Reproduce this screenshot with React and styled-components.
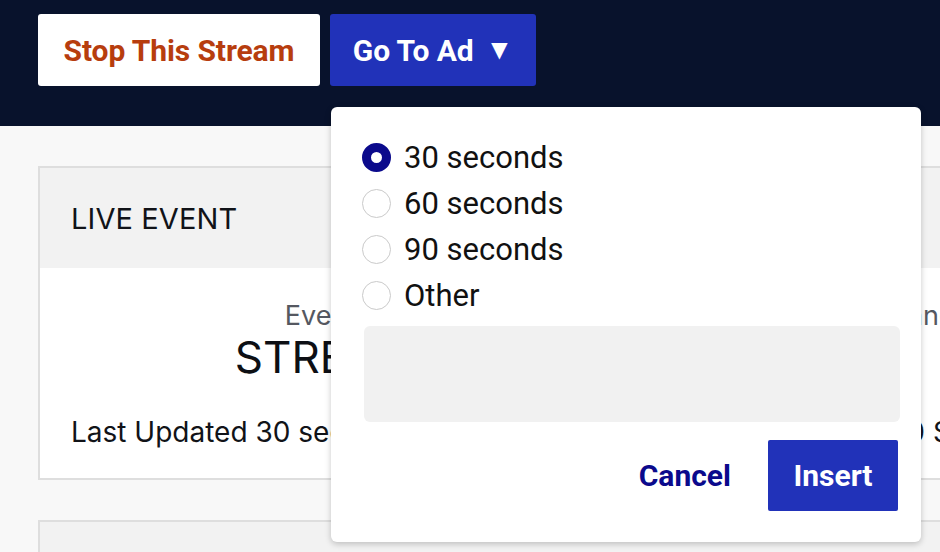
import React, { useState } from "react";
import styled, { createGlobalStyle } from "styled-components";

const Global = createGlobalStyle`
  html, body { margin: 0; padding: 0; }
  body {
    background: #f8f8f8;
    font-family: Inter, "Liberation Sans", sans-serif;
    overflow: hidden;
    width: 940px;
    height: 552px;
  }
  * { box-sizing: border-box; }
`;

const Page = styled.div`
  position: relative;
  width: 940px;
  height: 552px;
  overflow: hidden;
`;

const TopBar = styled.header`
  height: 126px;
  background: #08122c;
  display: flex;
  align-items: flex-start;
  gap: 10px;
  padding: 14px 0 0 38px;
`;

const BarButton = styled.button`
  height: 72px;
  width: ${(p) => p.$w}px;
  border: none;
  border-radius: 3px;
  background: ${(p) => (p.$primary ? "#2132b9" : "#ffffff")};
  color: ${(p) => (p.$primary ? "#ffffff" : "#b73d0e")};
  font-family: Roboto, "Liberation Sans", sans-serif;
  font-weight: 700;
  font-size: 30px;
  letter-spacing: -0.1px;
  display: flex;
  align-items: center;
  justify-content: center;
  gap: 12px;
  padding: 0;
`;

const Caret = styled.span`
  font-size: 28px;
  line-height: 1;
`;

const Main = styled.main`
  display: flex;
  flex-direction: column;
  gap: 40px;
  padding: 40px 0 0 38px;
`;

const Card = styled.section`
  width: 1240px;
  border: 2px solid #dedede;
  background: #ffffff;
`;

const CardHead = styled.div`
  height: 100px;
  background: #f2f2f2;
  display: flex;
  align-items: center;
  padding-left: 31px;
  font-size: 29px;
  color: #111318;
  letter-spacing: 0.1px;
`;

const CardBody = styled.div`
  padding: 32px 31px 29px;
  display: flex;
  flex-direction: column;
  gap: 33px;
`;

const Stats = styled.div`
  display: grid;
  grid-template-columns: 1fr 1fr;
`;

const Stat = styled.div`
  display: flex;
  flex-direction: column;
  align-items: center;
`;

const StatLabel = styled.div`
  font-size: 27px;
  color: #555861;
  line-height: 32px;
`;

const StatValue = styled.div`
  font-size: 44px;
  color: #0d0f14;
  line-height: 50px;
`;

const Footer = styled.div`
  display: grid;
  grid-template-columns: 1fr 1fr;
  font-size: 28px;
  line-height: 34px;
  color: #111318;
`;

const Popup = styled.div`
  position: absolute;
  left: 331px;
  top: 107px;
  width: 590px;
  height: 435px;
  background: #ffffff;
  border-radius: 6px;
  box-shadow: 0 2px 6px rgba(0, 0, 0, 0.22);
  padding: 28px 21px 31px 31px;
  display: flex;
  flex-direction: column;
  font-family: Roboto, "Liberation Sans", sans-serif;
`;

const Option = styled.label`
  height: 46px;
  display: flex;
  align-items: center;
  gap: 13px;
  font-size: 31px;
  color: #111;
  cursor: pointer;
`;

const Radio = styled.span`
  width: 29px;
  height: 29px;
  border-radius: 50%;
  flex: none;
  border: ${(p) => (p.$on ? "9px solid #0b0a8c" : "1.5px solid #cacaca")};
  background: #fff;
`;

const Field = styled.div`
  margin: 8px 0 0 2px;
  height: 96px;
  background: #f1f1f1;
  border-radius: 6px;
`;

const Actions = styled.div`
  margin-top: 18px;
  display: flex;
  justify-content: flex-end;
  align-items: center;
  gap: 37px;
  padding-right: 2px;
`;

const TextButton = styled.button`
  border: none;
  background: none;
  padding: 0;
  font-family: Roboto, "Liberation Sans", sans-serif;
  font-weight: 700;
  font-size: 30px;
  color: #0b0a8c;
`;

const SolidButton = styled.button`
  width: 130px;
  height: 71px;
  border: none;
  border-radius: 2px;
  background: #2132b9;
  color: #fff;
  font-family: Roboto, "Liberation Sans", sans-serif;
  font-weight: 700;
  font-size: 30px;
`;

const options = ["30 seconds", "60 seconds", "90 seconds", "Other"];

export default function App() {
  const [sel, setSel] = useState(0);
  return (
    <Page>
      <Global />
      <TopBar>
        <BarButton $w={282}>Stop This Stream</BarButton>
        <BarButton $w={206} $primary>
          Go To Ad <Caret>▼</Caret>
        </BarButton>
      </TopBar>
      <Main>
        <Card>
          <CardHead>LIVE EVENT</CardHead>
          <CardBody>
            <Stats>
              <Stat>
                <StatLabel>Event Status</StatLabel>
                <StatValue>STREAMING</StatValue>
              </Stat>
              <Stat>
                <StatLabel>Connections</StatLabel>
                <StatValue>1</StatValue>
              </Stat>
            </Stats>
            <Footer>
              <span>Last Updated 30 seconds ago</span>
              <span>Next Ad Break In: 10 Seconds</span>
            </Footer>
          </CardBody>
        </Card>
        <Card>
          <CardHead>STREAM HEALTH</CardHead>
        </Card>
      </Main>
      <Popup>
        {options.map((o, i) => (
          <Option key={o} onClick={() => setSel(i)}>
            <Radio $on={sel === i} />
            {o}
          </Option>
        ))}
        <Field />
        <Actions>
          <TextButton>Cancel</TextButton>
          <SolidButton>Insert</SolidButton>
        </Actions>
      </Popup>
    </Page>
  );
}
